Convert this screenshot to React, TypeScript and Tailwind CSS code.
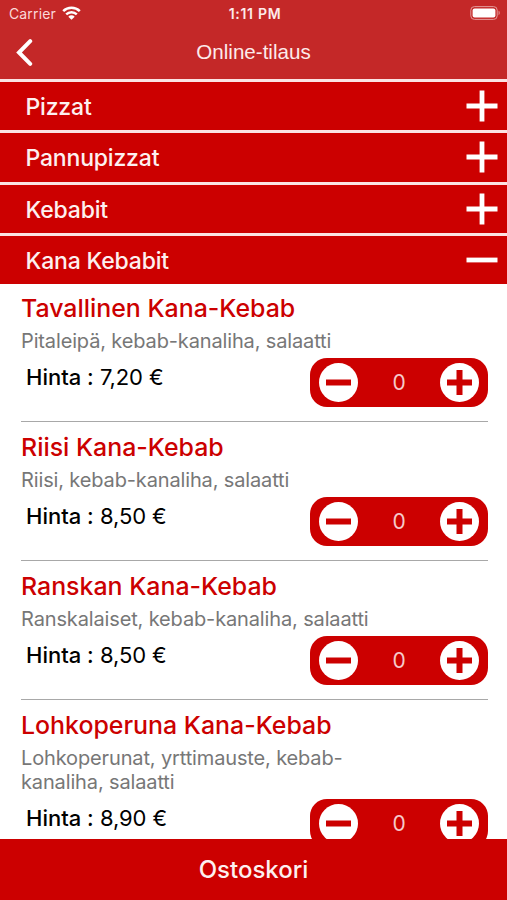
const CATEGORIES = [
  { id: 0, name: "Pizzat", open: false },
  { id: 1, name: "Pannupizzat", open: false },
  { id: 2, name: "Kebabit", open: false },
  { id: 3, name: "Kana Kebabit", open: true },
];

const PRODUCTS = [
  {
    id: 0,
    name: "Tavallinen Kana-Kebab",
    description: "Pitaleipä, kebab-kanaliha, salaatti",
    price: "7,20 €",
  },
  {
    id: 1,
    name: "Riisi Kana-Kebab",
    description: "Riisi, kebab-kanaliha, salaatti",
    price: "8,50 €",
  },
  {
    id: 2,
    name: "Ranskan Kana-Kebab",
    description: "Ranskalaiset, kebab-kanaliha, salaatti",
    price: "8,50 €",
  },
  {
    id: 3,
    name: "Lohkoperuna Kana-Kebab",
    description: "Lohkoperunat, yrttimauste, kebab-kanaliha, salaatti",
    price: "8,90 €",
  },
];

function StatusBar() {
  return (
    <div className="grid h-[26px] grid-cols-3 items-center pr-1.5 pl-[9px] text-[14px]">
      <div className="flex items-center gap-1.5 text-[#fbd9d9]">
        <span className="tracking-[0.01em]">Carrier</span>
        <svg width="19" height="14" viewBox="0 0 19 14" fill="none">
          <path d="M1.2 5.1a11.8 11.8 0 0 1 16.6 0" stroke="#fff" strokeWidth="2.5" />
          <path d="M4.2 8.4a7.5 7.5 0 0 1 10.6 0" stroke="#fff" strokeWidth="2.4" />
          <path d="M9.5 13.8 6.3 10.7a4.5 4.5 0 0 1 6.4 0z" fill="#fff" />
        </svg>
      </div>
      <span className="text-center font-semibold tracking-[0.05em] text-[#fdeaea]">1:11 PM</span>
      <svg className="justify-self-end" width="31" height="14" viewBox="0 0 31 14">
        <rect x="0.8" y="0.6" width="26.4" height="12.8" rx="3.6" fill="none" stroke="#e39a9a" />
        <rect x="2.6" y="2.4" width="22.8" height="9.2" rx="2" fill="#fff" />
        <path d="M28.6 4.8v4.4c1.5-.5 1.5-3.9 0-4.4z" fill="#e39a9a" />
      </svg>
    </div>
  );
}

function Header() {
  return (
    <header className="h-[79px] shrink-0 bg-[#c42828]">
      <StatusBar />
      <div className="grid h-[53px] grid-cols-[1fr_auto_1fr] items-center pl-4">
        <svg width="17" height="27" viewBox="0 0 17 27" fill="none">
          <path d="M14.2 2.2 3 13.5l11.2 11.3" stroke="#fff" strokeWidth="4" strokeLinecap="round" />
        </svg>
        <h1 className="pr-4 font-['Liberation_Sans',sans-serif] text-[20.6px] text-[#fdeaea]">
          Online-tilaus
        </h1>
      </div>
    </header>
  );
}

function Category({ name, open }: { name: string; open: boolean }) {
  return (
    <div className="flex h-[51.33px] items-center justify-between border-t-[3px] border-[#fbe3e3] bg-[#cc0000] pr-[9px] pl-[25.5px]">
      <span className="pt-0.5 text-[23px] font-medium tracking-[-0.008em] text-[#fdf0f0]">{name}</span>
      <svg width="32" height="32" viewBox="0 0 32 32">
        <path d={open ? "M.5 16h31" : "M.5 16h31M16 .5v31"} stroke="#fff" strokeWidth="4.8" />
      </svg>
    </div>
  );
}

function Stepper() {
  return (
    <div className="flex h-[49px] w-[178px] items-center justify-between rounded-[17px] bg-[#cc0000] px-[9px]">
      <svg width="39" height="39" viewBox="0 0 39 39">
        <circle cx="19.5" cy="19.5" r="19.5" fill="#fff" />
        <path d="M7 19.5h25" stroke="#cc0000" strokeWidth="6" />
      </svg>
      <span className="text-[21px] text-[#f6caca]">0</span>
      <svg width="39" height="39" viewBox="0 0 39 39">
        <circle cx="19.5" cy="19.5" r="19.5" fill="#fff" />
        <path d="M7 19.5h25M19.5 7v25" stroke="#cc0000" strokeWidth="6" />
      </svg>
    </div>
  );
}

export default function App() {
  return (
    <div className="flex h-[900px] w-[507px] flex-col overflow-hidden bg-white font-[Inter,sans-serif]">
      <Header />
      <nav className="shrink-0">
        {CATEGORIES.map((category) => (
          <Category key={category.id} name={category.name} open={category.open} />
        ))}
      </nav>
      {/* Products of the open category */}
      <main className="-mt-px min-h-0 flex-1 overflow-hidden pr-[19px] pl-[21px]">
        {PRODUCTS.map((product) => (
          <article key={product.id} className="border-b border-[#a8a8a8] pt-2 pb-[13.9px]">
            <h2 className="text-[24.9px] leading-[34px] font-medium whitespace-nowrap text-[#cc0000]">
              {product.name}
            </h2>
            <p className="w-[360px] pt-1 text-[20px] leading-[24.5px] tracking-[-0.007em] text-[#777777]">
              {product.description}
            </p>
            <div className="flex items-start justify-between pt-[4.5px]">
              <p className="pt-[6px] pl-[5px] text-[22px] leading-[26px] text-black">
                <span className="font-medium">Hinta :</span>{" "}
                <span className="tracking-[-0.005em]">{product.price}</span>
              </p>
              <Stepper />
            </div>
          </article>
        ))}
      </main>
      <button className="h-[61px] shrink-0 bg-[#cc0000] text-[24px] font-medium text-[#fdf0f0]">
        Ostoskori
      </button>
    </div>
  );
}
